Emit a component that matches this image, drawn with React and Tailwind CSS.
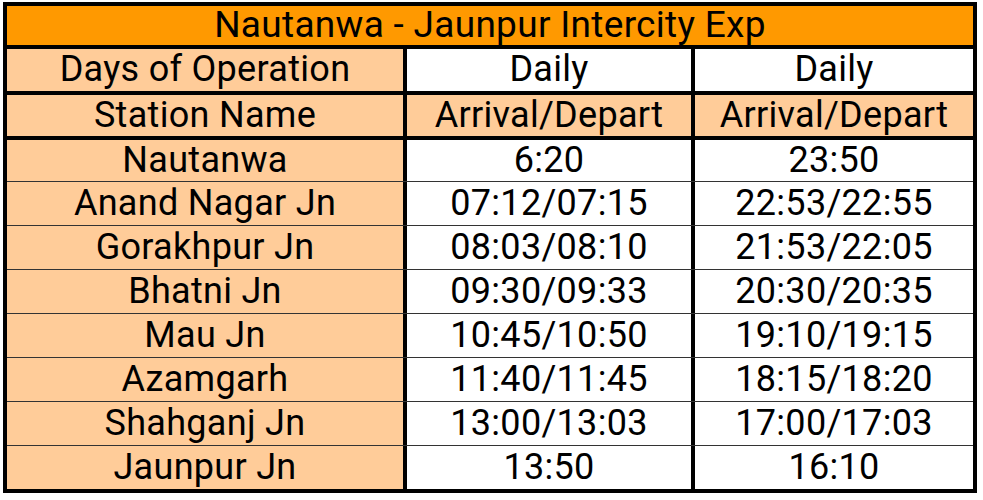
const rows = [
  ["Nautanwa", "6:20", "23:50"],
  ["Anand Nagar Jn", "07:12/07:15", "22:53/22:55"],
  ["Gorakhpur Jn", "08:03/08:10", "21:53/22:05"],
  ["Bhatni Jn", "09:30/09:33", "20:30/20:35"],
  ["Mau Jn", "10:45/10:50", "19:10/19:15"],
  ["Azamgarh", "11:40/11:45", "18:15/18:20"],
  ["Shahganj Jn", "13:00/13:03", "17:00/17:03"],
  ["Jaunpur Jn", "13:50", "16:10"],
];

function Row({ cells, h, mid, last, bottom }) {
  return (
    <div className={`flex ${h} ${bottom}`}>
      <div className="w-[400px] border-r-4 border-black flex items-center justify-center pb-[2px] bg-[#ffcc99]">
        {cells[0]}
      </div>
      <div className={`w-[288px] border-r-4 border-black flex items-center justify-center pb-[2px] ${mid}`}>
        {cells[1]}
      </div>
      <div className={`flex-1 flex items-center justify-center pb-[2px] ${last}`}>{cells[2]}</div>
    </div>
  );
}

export default function App() {
  return (
    <div className="w-[983px] h-[500px] bg-white pt-[2px] pl-[3px]" style={{ fontFamily: 'Roboto, sans-serif' }}>
      <div className="w-[974px] border-4 border-black text-black text-[36px] font-normal leading-none tracking-[0.3px]">
        <div className="h-[43px] bg-[#ff9900] border-b-4 border-black flex items-center justify-center pb-[2px] text-[37px]">
          Nautanwa - Jaunpur Intercity Exp
        </div>
        <Row cells={["Days of Operation", "Daily", "Daily"]} h="h-[46px]" bottom="border-b-4 border-black" mid="bg-white" last="bg-white" />
        <Row cells={["Station Name", "Arrival/Depart", "Arrival/Depart"]} h="h-[45px]" bottom="border-b-4 border-black" mid="bg-[#ffcc99]" last="bg-[#ffcc99]" />
        {rows.map((r, i) => (
          <Row
            key={r[0]}
            cells={r}
            h={i === 0 ? "h-[42px]" : i === rows.length - 1 ? "h-[43px]" : "h-[44px]"}
            bottom={i === rows.length - 1 ? "" : "border-b border-[#333]"}
            mid="bg-white"
            last="bg-white"
          />
        ))}
      </div>
    </div>
  );
}
